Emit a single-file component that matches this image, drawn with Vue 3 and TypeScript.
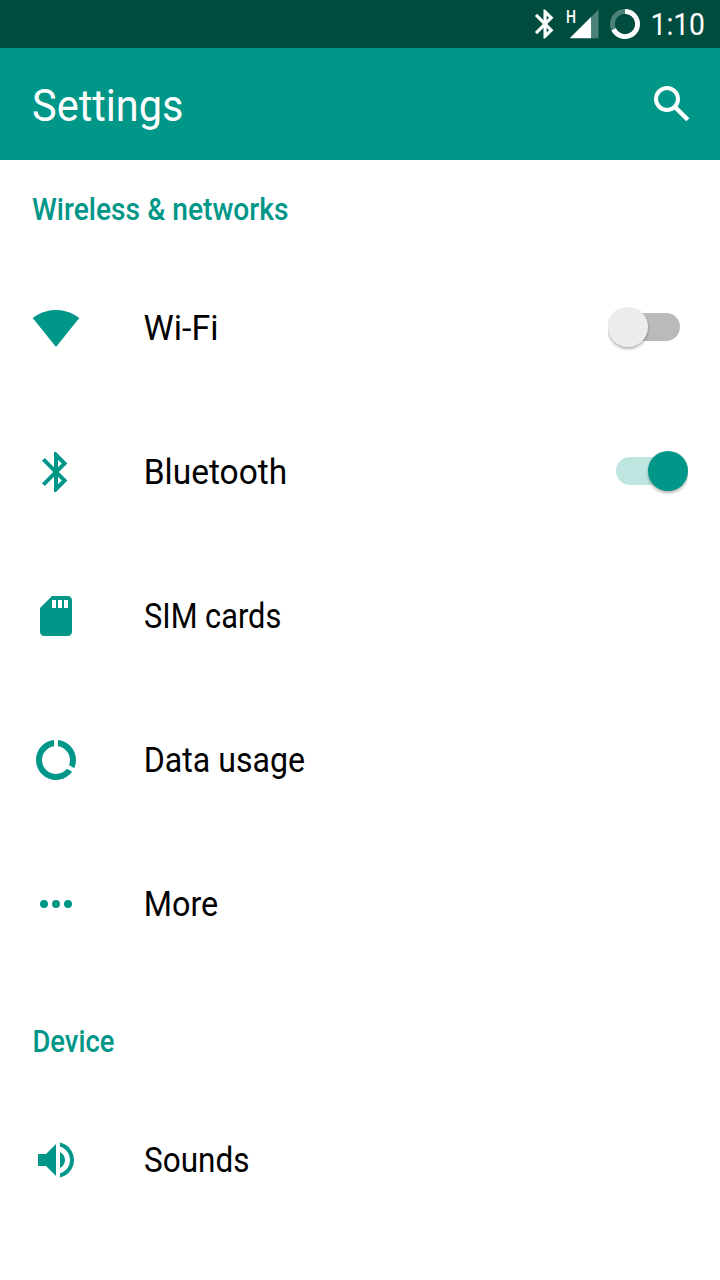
<script setup lang="ts">
interface Row {
  label: string
  width: number
  x: number
  icon: string
  toggle?: 'on' | 'off'
}
interface Section {
  title: string
  width: number
  x: number
  rows: Row[]
}

const bluetooth =
  'M17.71 7.71L12 2h-1v7.59L6.41 5 5 6.41 10.59 12 5 17.59 6.41 19 11 14.41V22h1l5.71-5.71-4.3-4.29 4.3-4.29zM13 5.83l1.88 1.88L13 9.59V5.83zm1.88 10.46L13 18.17v-3.76l1.88 1.88z'

const sections: Section[] = [
  {
    title: 'Wireless & networks',
    x: 0,
    width: 256.5,
    rows: [
      {
        label: 'Wi-Fi', x: -0.5, width: 75, toggle: 'off',
        icon: 'M12 21.5L23.64 7c-.45-.34-4.93-4-11.64-4C5.28 3 .81 6.66.36 7z',
      },
      { label: 'Bluetooth', x: -0.3, width: 143.5, toggle: 'on', icon: bluetooth },
      {
        label: 'SIM cards', x: 0, width: 137.3,
        icon: 'M18 2h-8L4 8v12c0 1.1.9 2 2 2h12c1.1 0 2-.9 2-2V4c0-1.1-.9-2-2-2zm-6 6h-2V4h2v4zm3 0h-2V4h2v4zm3 0h-2V4h2v4z',
      },
      {
        label: 'Data usage', x: -0.3, width: 161.3,
        icon: 'M13 2.05v3.03c3.39.49 6 3.39 6 6.92 0 .9-.18 1.75-.48 2.54l2.6 1.53c.56-1.24.88-2.62.88-4.07 0-5.18-3.95-9.45-9-9.95zM12 19c-3.87 0-7-3.13-7-7 0-3.53 2.61-6.43 6-6.92V2.05c-5.06.5-9 4.76-9 9.95 0 5.52 4.47 10 9.99 10 3.31 0 6.24-1.61 8.06-4.09l-2.6-1.53C16.17 17.98 14.21 19 12 19z',
      },
      {
        label: 'More', x: -0.3, width: 74.5,
        icon: 'M6 10a2 2 0 1 0 0 4a2 2 0 1 0 0-4zm6 0a2 2 0 1 0 0 4a2 2 0 1 0 0-4zm6 0a2 2 0 1 0 0 4a2 2 0 1 0 0-4z',
      },
    ],
  },
  {
    title: 'Device',
    x: 0.4,
    width: 82,
    rows: [
      {
        label: 'Sounds', x: 0, width: 105.5,
        icon: 'M3 9v6h4l5 5V4L7 9H3zm13.5 3c0-1.77-1.02-3.29-2.5-4.03v8.05c1.48-.73 2.5-2.25 2.5-4.02zM14 3.23v2.06c2.89.86 5 3.54 5 6.71s-2.11 5.85-5 6.71v2.06c4.01-.91 7-4.49 7-8.77s-2.99-7.86-7-8.77z',
      },
    ],
  },
]
</script>

<template>
  <div class="screen">
    <header class="status">
      <svg class="status-icons" width="128" height="48" viewBox="528 0 128 48">
        <g transform="translate(527.9 6.8) scale(1.433)">
          <path :d="bluetooth" fill="#fff" stroke="#fff" stroke-width=".25" />
        </g>
        <text class="net" x="566" y="23" textLength="10" lengthAdjust="spacingAndGlyphs">H</text>
        <path d="M591 17.2L598.5 9.6V38.3H591z" fill="#4d827a" />
        <path d="M569.7 38.3L591 17V38.3z" fill="#fff" />
        <circle cx="625" cy="24" r="12.6" fill="none" stroke="#4d827a" stroke-width="4.8" />
        <path d="M625 11.4A12.6 12.6 0 1 1 613.6 29.4" fill="none" stroke="#fff" stroke-width="4.8" />
      </svg>
      <svg class="clock" width="64" height="48">
        <text x="-5.5" y="35" textLength="54.5" lengthAdjust="spacingAndGlyphs">1:10</text>
      </svg>
    </header>

    <div class="toolbar">
      <svg class="title" width="200" height="112">
        <text x="0" y="73" textLength="151.5" lengthAdjust="spacingAndGlyphs">Settings</text>
      </svg>
      <svg width="48" height="48" viewBox="648 80 48 48" fill="none" stroke="#fff" stroke-width="4">
        <circle cx="667" cy="99" r="11" />
        <path d="M675 107L687.8 119.8" stroke-width="4.4" />
      </svg>
    </div>

    <section v-for="s in sections" :key="s.title" class="section">
      <svg class="heading" width="400" height="96">
        <text :x="s.x" y="60" :textLength="s.width" lengthAdjust="spacingAndGlyphs">{{ s.title }}</text>
      </svg>
      <div v-for="r in s.rows" :key="r.label" class="row">
        <svg class="icon" width="48" height="48" viewBox="0 0 24 24"><path :d="r.icon" /></svg>
        <svg class="label" width="240" height="144">
          <text :x="r.x" y="84" :textLength="r.width" lengthAdjust="spacingAndGlyphs">{{ r.label }}</text>
        </svg>
        <div v-if="r.toggle" class="switch" :class="r.toggle">
          <div class="track"><div class="thumb"></div></div>
        </div>
      </div>
    </section>
  </div>
</template>

<style>
body {
  margin: 0;
  background: #fff;
}
</style>

<style scoped>
.screen {
  width: 720px;
  height: 1280px;
  overflow: hidden;
  background: #fff;
  font-family: Roboto, "Liberation Sans", sans-serif;
}
svg {
  display: block;
  flex: none;
}
.status {
  display: flex;
  justify-content: flex-end;
  height: 48px;
  background: #004d40;
}
.net {
  font-size: 17.5px;
  font-weight: 500;
  fill: #fff;
}
.clock,
.heading,
.label,
.title {
  overflow: visible;
}
.clock text {
  font-size: 31px;
  fill: #fff;
}
.toolbar {
  display: flex;
  align-items: center;
  justify-content: space-between;
  height: 112px;
  padding: 0 24px 0 32px;
  background: #009688;
}
.title text {
  font-size: 45px;
  fill: #fff;
}
.heading {
  margin-left: 32px;
}
.heading text {
  font-size: 32px;
  font-weight: 500;
  fill: #009688;
}
.section + .section {
  padding-top: 16px;
}
.row {
  display: flex;
  align-items: center;
  height: 144px;
  padding: 0 32px;
}
.icon {
  fill: #009688;
}
.label {
  margin-left: 64px;
}
.label text {
  font-size: 35.5px;
  fill: #000;
}
.switch {
  box-sizing: border-box;
  width: 80px;
  height: 42px;
  margin-left: auto;
  padding: 6px 8px 8px;
  overflow-x: clip;
}
.track {
  display: flex;
  align-items: center;
  height: 28px;
  border-radius: 14px;
  background: #bababa;
}
.thumb {
  flex: none;
  width: 40px;
  height: 40px;
  margin: 0 -8px;
  border-radius: 50%;
  background: #ececec;
  box-shadow: 0 2px 3px rgba(0, 0, 0, 0.3);
}
.on .track {
  justify-content: flex-end;
  background: #bfe5e1;
}
.on .thumb {
  background: #009688;
}
</style>
